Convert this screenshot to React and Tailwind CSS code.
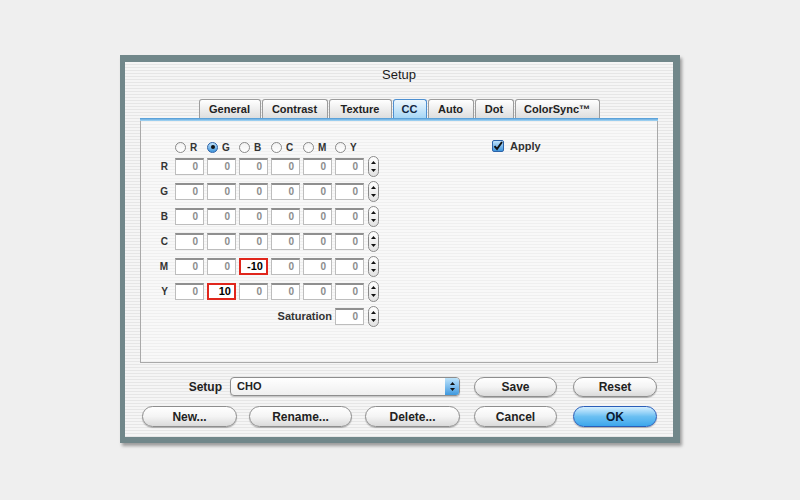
import React from 'react';

const stripes =
  'bg-[repeating-linear-gradient(180deg,#f5f5f5_0px,#f5f5f5_2px,#e6e6e6_2px,#e6e6e6_3px)]';

const tabs = [
  { label: 'General', w: 'w-[62px]' },
  { label: 'Contrast', w: 'w-[66px]' },
  { label: 'Texture', w: 'w-[63px]' },
  { label: 'CC', w: 'w-[34px]', active: true },
  { label: 'Auto', w: 'w-[46px]' },
  { label: 'Dot', w: 'w-[39px]' },
  { label: 'ColorSync™', w: 'w-[85px]' },
];

const channels = ['R', 'G', 'B', 'C', 'M', 'Y'];

// marked cells: [row, col] -> value
const marked = { 'M-2': '-10', 'Y-1': '10' };

function Stepper() {
  return (
    <div className="ml-[4px] w-[11px] h-[21px] rounded-full border border-[#8a8a8a] bg-gradient-to-b from-white to-[#e2e2e2] flex flex-col items-center justify-center gap-[5px]">
      <svg width="5" height="3" viewBox="0 0 5 3">
        <path d="M2.5 0L5 3H0z" fill="#111" />
      </svg>
      <svg width="5" height="3" viewBox="0 0 5 3">
        <path d="M0 0h5L2.5 3z" fill="#111" />
      </svg>
    </div>
  );
}

function Field({ value }) {
  if (value) {
    return (
      <div className="w-[29px] h-[17px] bg-white border-2 border-[#e0261c] text-right pr-[3px] text-[11px] font-bold text-black leading-[13px]">
        {value}
      </div>
    );
  }
  return (
    <div className="w-[29px] h-[17px] bg-white border border-[#bdbdbd] border-t-2 border-t-[#8f8f8f] text-right pr-[5px] text-[10px] font-bold text-[#8c8c8c] leading-[14px]">
      0
    </div>
  );
}

function Radio({ checked }) {
  if (checked) {
    return (
      <div className="w-[11px] h-[11px] rounded-full border border-[#2d63a8] bg-gradient-to-b from-[#bfe3fb] to-[#3d95dc] flex items-center justify-center">
        <div className="w-[4px] h-[4px] rounded-full bg-[#111]" />
      </div>
    );
  }
  return (
    <div className="w-[11px] h-[11px] rounded-full border border-[#8a8a8a] bg-gradient-to-b from-[#f2f2f2] to-white" />
  );
}

function Button({ label, w, primary }) {
  const base =
    'h-full rounded-full flex items-center justify-center text-[12px] font-bold shadow-[0_1px_1px_rgba(0,0,0,0.25)]';
  const look = primary
    ? 'border border-[#2a5db8] bg-gradient-to-b from-[#d4efff] via-[#6cc0f2] to-[#3aa6ec] text-[#0c1a33]'
    : 'border border-[#8e8e8e] bg-gradient-to-b from-white via-[#f4f4f4] to-[#dadada] text-[#222]';
  return <div className={`${w} ${base} ${look}`}>{label}</div>;
}

export default function App() {
  return (
    <div
      className="w-[800px] h-[500px] bg-[#efefef] pt-[55px] pl-[120px]"
      style={{ fontFamily: '"Liberation Sans", Arial, sans-serif' }}
    >
      <div className="w-[560px] h-[388px] bg-[#71878a] pt-[7px] pl-[5px] pr-[7px] pb-[6px] shadow-[2px_3px_3px_rgba(0,0,0,0.35)]">
        <div className={`w-[548px] h-[375px] ${stripes} flex flex-col px-[15px]`}>
          {/* Title */}
          <div className="h-[26px] flex items-center justify-center text-[13px] text-[#1a1a1a]">
            Setup
          </div>

          {/* Tabs */}
          <div className="mt-[11px] h-[19px] flex justify-center gap-[1px]">
            {tabs.map((t) => (
              <div
                key={t.label}
                className={`${t.w} h-full rounded-t-[3px] border border-b-0 flex items-center justify-center text-[11px] font-bold ${
                  t.active
                    ? 'border-[#4d8fd0] bg-gradient-to-b from-[#eef8ff] to-[#a6d6f5] text-[#10243f]'
                    : 'border-[#9c9c9c] bg-gradient-to-b from-white to-[#dedede] text-[#222]'
                }`}
              >
                {t.label}
              </div>
            ))}
          </div>

          {/* Panel */}
          <div className="h-[245px] flex flex-col">
            <div className="h-[3px] bg-gradient-to-b from-[#4b97d4] to-[#a9d9f5]" />
            <div className="flex-1 border-x border-b border-[#a9a9a9] bg-white/35 flex pt-[20px]">
              <div className="flex flex-col">
                {/* radio row */}
                <div className="h-[12px] flex pl-[34px]">
                  {channels.map((c, i) => (
                    <div key={c} className="w-[32px] flex items-center gap-[4px]">
                      <Radio checked={i === 1} />
                      <span className="text-[10px] leading-[11px] font-bold text-[#333]">{c}</span>
                    </div>
                  ))}
                </div>

                {/* field rows */}
                <div className="mt-[3px] flex flex-col gap-[4px]">
                  {channels.map((c) => (
                    <div key={c} className="h-[21px] flex items-center">
                      <span className="w-[27px] text-right text-[10px] font-bold text-[#333]">{c}</span>
                      <div className="ml-[7px] flex gap-[3px]">
                        {[0, 1, 2, 3, 4, 5].map((k) => (
                          <Field key={k} value={marked[`${c}-${k}`]} />
                        ))}
                      </div>
                      <Stepper />
                    </div>
                  ))}
                  <div className="h-[21px] flex items-center">
                    <span className="w-[191px] text-right text-[11px] font-bold text-[#333]">Saturation</span>
                    <div className="ml-[3px]">
                      <Field />
                    </div>
                    <Stepper />
                  </div>
                </div>
              </div>

              {/* Apply */}
              <div className="ml-[113px] mt-[-2px] h-[14px] flex items-center gap-[6px]">
                <div className="w-[12px] h-[12px] rounded-[2px] border border-[#2d63a8] bg-gradient-to-b from-[#bfe3fb] to-[#3d95dc] flex items-center justify-center">
                  <svg width="10" height="10" viewBox="0 0 10 10">
                    <path d="M1.5 5.2L4 8 9 1" fill="none" stroke="#111" strokeWidth="2" />
                  </svg>
                </div>
                <span className="text-[11px] font-bold text-[#333]">Apply</span>
              </div>
            </div>
          </div>

          {/* Setup popup row */}
          <div className="mt-[14px] h-[19px] flex">
            <div className="w-[82px] flex items-center justify-end text-[12px] font-bold text-[#222]">
              Setup
            </div>
            <div className="ml-[8px] w-[230px] h-full rounded-[4px] border border-[#8e8e8e] bg-gradient-to-b from-white to-[#efefef] flex shadow-[0_1px_1px_rgba(0,0,0,0.2)]">
              <span className="flex-1 pl-[6px] flex items-center text-[11px] font-bold text-[#222]">CHO</span>
              <div className="w-[14px] h-full rounded-r-[3px] bg-gradient-to-b from-[#bde4fb] to-[#3b98de] flex flex-col items-center justify-center gap-[3px]">
                <svg width="5" height="3" viewBox="0 0 5 3">
                  <path d="M2.5 0L5 3H0z" fill="#111" />
                </svg>
                <svg width="5" height="3" viewBox="0 0 5 3">
                  <path d="M0 0h5L2.5 3z" fill="#111" />
                </svg>
              </div>
            </div>
            <div className="ml-[14px] h-[20px]">
              <Button label="Save" w="w-[83px]" />
            </div>
            <div className="ml-[16px] h-[20px]">
              <Button label="Reset" w="w-[84px]" />
            </div>
          </div>

          {/* Buttons row */}
          <div className="mt-[10px] h-[21px] flex pl-[2px]">
            <Button label="New..." w="w-[95px]" />
            <div className="ml-[12px] h-full">
              <Button label="Rename..." w="w-[103px]" />
            </div>
            <div className="ml-[13px] h-full">
              <Button label="Delete..." w="w-[95px]" />
            </div>
            <div className="ml-[14px] h-full">
              <Button label="Cancel" w="w-[83px]" />
            </div>
            <div className="ml-[16px] h-full">
              <Button label="OK" w="w-[84px]" primary />
            </div>
          </div>
        </div>
      </div>
    </div>
  );
}
